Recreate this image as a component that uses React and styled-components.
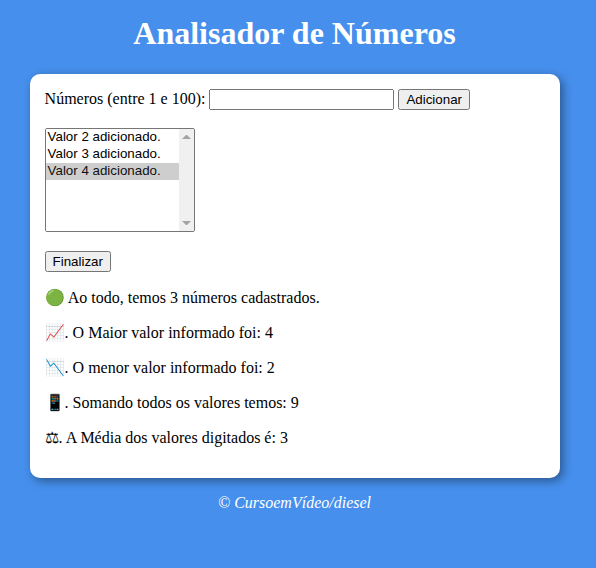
import React from "react";
import styled, { createGlobalStyle } from "styled-components";

const GlobalStyle = createGlobalStyle`
  body {
    margin: 8px;
    background: rgb(70, 143, 236);
    font: normal 16px "Liberation Serif", "Times New Roman", serif;
  }
`;

const Header = styled.header`
  color: white;
  text-align: center;
  width: 573px;
`;

const Title = styled.h1`
  margin: 7px 0 22px;
  font-size: 32px;
  line-height: 37px;
`;

const Card = styled.section`
  box-sizing: border-box;
  width: 530px;
  height: 404px;
  margin: 0 0 0 21.6px;
  padding: 15px;
  background: white;
  border-radius: 10px;
  box-shadow: 3px 3px 10px rgba(0, 0, 0, 0.4);
`;

const NumberInput = styled.input`
  box-sizing: border-box;
  width: 185px;
  height: 21px;
`;

const Button = styled.input`
  font: 13.333px "Liberation Sans", Arial, sans-serif;
`;

const ListBox = styled.div`
  box-sizing: border-box;
  display: flex;
  width: 150px;
  height: 104px;
  margin: 18px 0 19px;
  border: 1px solid rgb(118, 118, 118);
  border-radius: 2px;
  overflow: hidden;
`;

const List = styled.select`
  flex: 1;
  min-width: 0;
  height: 102px;
  border: 0;
  border-radius: 0;
  outline: 0;
  font: 13.333px "Liberation Sans", Arial, sans-serif;
`;

const ScrollTrack = styled.div`
  display: flex;
  flex-direction: column;
  justify-content: space-between;
  width: 15px;
  background: #f0f0f0;
`;

const Arrow = styled.svg`
  display: block;
  width: 15px;
  height: 15px;
  fill: #a3a3a3;
`;

const Line = styled.p`
  margin: 16px 0;
  line-height: 19px;
`;

const Footer = styled.footer`
  width: 573px;
  color: white;
  text-align: center;
  font-style: italic;

  ${Line} {
    margin-top: 15px;
  }
`;

export default function App() {
  return (
    <>
      <GlobalStyle />
      <Header><Title>Analisador de Números</Title></Header>
      <Card>
        <div>
          Números (entre 1 e 100): <NumberInput type="number" />{" "}
          <Button type="button" value="Adicionar" />
        </div>
        <ListBox>
          <List size={6} defaultValue="4">
            <option value="2">Valor 2 adicionado.</option>
            <option value="3">Valor 3 adicionado.</option>
            <option value="4">Valor 4 adicionado.</option>
          </List>
          <ScrollTrack>
            <Arrow viewBox="0 0 15 15"><path d="M3 10 L7 6 H8 L12 10 Z" /></Arrow>
            <Arrow viewBox="0 0 15 15"><path d="M3 5 L7 9 H8 L12 5 Z" /></Arrow>
          </ScrollTrack>
        </ListBox>
        <Button type="button" value="Finalizar" />
        <Line>🟢 Ao todo, temos 3 números cadastrados.</Line>
        <Line>📈. O Maior valor informado foi: 4</Line>
        <Line>📉. O menor valor informado foi: 2</Line>
        <Line>📱. Somando todos os valores temos: 9</Line>
        <Line>⚖. A Média dos valores digitados é: 3</Line>
      </Card>
      <Footer><Line>© CursoemVídeo/diesel</Line></Footer>
    </>
  );
}
